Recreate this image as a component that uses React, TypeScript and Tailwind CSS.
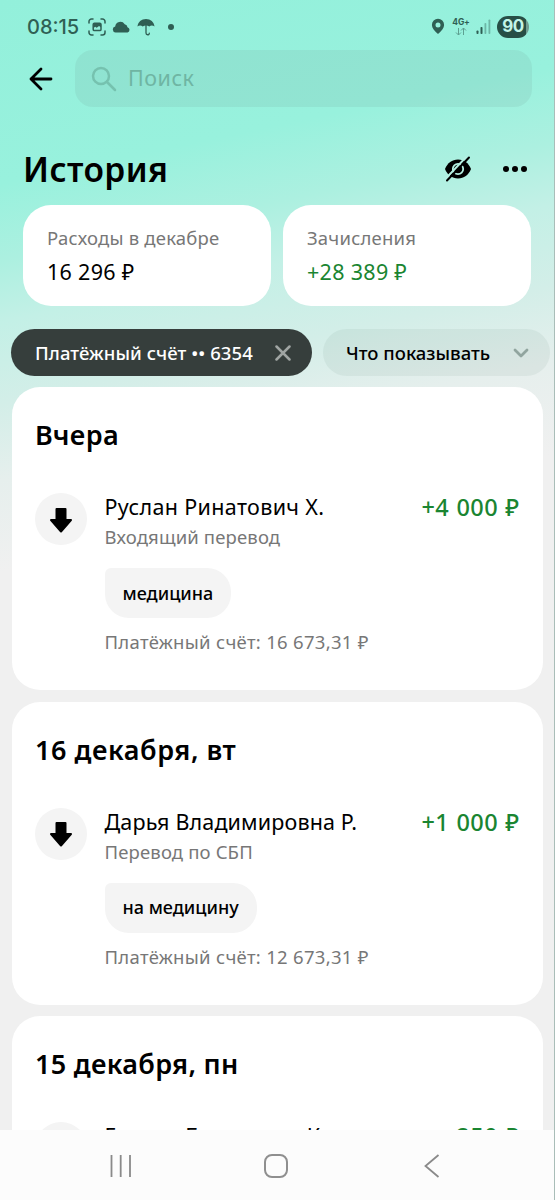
import type { ReactNode } from "react";

const OPERATIONS = [
  {
    day: "Вчера",
    dayClass: "tracking-[0.4px]",
    name: "Руслан Ринатович Х.",
    nameClass: "tracking-[0.35px]",
    kind: "Входящий перевод",
    note: "медицина",
    amount: "+4 000 ₽",
    balance: "Платёжный счёт: 16 673,31 ₽",
  },
  {
    day: "16 декабря, вт",
    dayClass: "tracking-[0.55px]",
    name: "Дарья Владимировна Р.",
    nameClass: "tracking-[0.15px]",
    kind: "Перевод по СБП",
    note: "на медицину",
    amount: "+1 000 ₽",
    balance: "Платёжный счёт: 12 673,31 ₽",
  },
  {
    day: "15 декабря, пн",
    dayClass: "tracking-[0.3px]",
    name: "Галина Борисовна К.",
    nameClass: "tracking-[0.3px]",
    kind: "Перевод по СБП",
    note: "на медицину",
    amount: "+250 ₽",
    balance: "Платёжный счёт: 11 673,31 ₽",
  },
];

function StatusBar() {
  return (
    <div className="flex h-[50px] items-center justify-between pt-[3px] pr-[25px] pl-[27px] text-[#2f5f54]">
      <div className="flex items-center">
        <span className="w-[52px] font-['Inter'] text-[20px] leading-none font-medium whitespace-nowrap">08:15</span>
        <svg className="ml-[9px]" width="18" height="18" viewBox="0 0 18 18" fill="none" stroke="currentColor" strokeWidth="1.5" strokeLinecap="round">
          <path d="M1 5V3.5A2.5 2.5 0 0 1 3.5 1H5M13 1h1.5A2.5 2.5 0 0 1 17 3.5V5M17 13v1.5a2.5 2.5 0 0 1-2.5 2.5H13M5 17H3.5A2.5 2.5 0 0 1 1 14.5V13" />
          <rect x="5.2" y="5.2" width="7.8" height="7.4" rx="1.2" />
          <path d="M5.5 5.5h7.5v3.7l-2-1.2-2.3 1.7-1.5-1-1.7 1.3Z" fill="currentColor" stroke="none" />
        </svg>
        <svg className="ml-[6px]" width="19" height="12" viewBox="0 0 19 12" fill="currentColor">
          <path d="M3.5 11.5a3.1 3.1 0 0 1-.3-6.100A5.200 5.200 0 0 1 12.700 3.200a3.600 3.600 0 0 1 2.800 3.100 2.700 2.700 0 0 1 .1 5.200Z" />
        </svg>
        <svg className="ml-[6px]" width="18" height="18" viewBox="0 0 18 18" fill="none">
          <path d="M.5 8.500C.8 4 4.500 1 9 1s8.200 3 8.500 7.500c-1.600-1.200-3.700-1.200-5.200 0-1.900-1.300-4.700-1.300-6.600 0-1.500-1.200-3.600-1.200-5.200 0Z" fill="currentColor" />
          <path d="M9 7v8c0 2.300 3.300 2.300 3.300.2" stroke="currentColor" strokeWidth="1.300" strokeLinecap="round" />
        </svg>
        <span className="ml-[13px] size-[6px] rounded-full bg-current" />
      </div>
      <div className="flex items-center">
        <svg width="14" height="17" viewBox="0 0 14 17" fill="currentColor" fillRule="evenodd">
          <path d="M7 .8a6.100 6.100 0 0 0-6.100 6.100C.9 10.200 3.500 12.600 7 16c3.500-3.400 6.100-5.800 6.100-9.100A6.100 6.100 0 0 0 7 .8Zm0 3.600a2.500 2.500 0 1 1 0 5 2.500 2.500 0 0 1 0-5Z" />
        </svg>
        <div className="ml-[7px] flex w-[18px] flex-col items-center">
          <span className="font-['Inter'] text-[8.5px] leading-[9px] font-bold tracking-[-0.2px]">4G+</span>
          <svg width="12" height="9" viewBox="0 0 12 9" fill="none" stroke="currentColor" strokeWidth="1" opacity=".55">
            <path d="M3.500 1v7M1 5.500 3.500 8 6 5.500M8.500 8V1M6 3.500 8.500 1 11 3.500" />
          </svg>
        </div>
        <svg className="ml-[6px]" width="15" height="16" viewBox="0 0 15 16" fill="currentColor">
          <rect x=".5" y="11.5" width="2" height="3.5" rx=".8" />
          <rect x="4.5" y="8" width="2" height="7" rx=".8" />
          <rect x="8.5" y="4" width="1.8" height="11" rx=".8" opacity=".4" />
          <rect x="12.5" y=".5" width="1.8" height="14.5" rx=".8" opacity=".4" />
        </svg>
        <div className="ml-[6px] flex h-[22px] w-[32px] items-center justify-center rounded-full bg-[linear-gradient(90deg,#274f46_91%,#6f9d92_91%)] font-['Inter'] text-[17px] leading-none font-bold tracking-[-0.5px] text-[#c3f5e8]">
          90
        </div>
      </div>
    </div>
  );
}

function SummaryCard({ title, children }: { title: string; children: ReactNode }) {
  return (
    <div className="h-[101px] flex-1 rounded-[28px] bg-white pt-[19px] pl-6">
      <div className="text-[18.5px] leading-[28px] tracking-[0.2px] whitespace-nowrap text-[#777]">{title}</div>
      <div className="mt-[6px] text-[21.5px] leading-[28px] tracking-[0.3px] whitespace-nowrap">{children}</div>
    </div>
  );
}

function DayCard({ op }: { op: (typeof OPERATIONS)[number] }) {
  return (
    <section className="h-[303px] shrink-0 rounded-[28px] bg-white pt-[28px] pr-[23px] pl-[23px]">
      <h2 className={`text-[27px] leading-[40px] font-semibold whitespace-nowrap ${op.dayClass}`}>{op.day}</h2>
      <div className="mt-[38px] flex">
        <div className="flex size-[52px] shrink-0 items-center justify-center rounded-full bg-[#f4f4f4]">
          <svg className="mt-[2px]" width="24" height="27" viewBox="0 0 24 27" fill="#000" stroke="#000" strokeWidth="2" strokeLinejoin="round">
            <path d="M7.500 2h9v11h5.500L12 24.500 2 13h5.500Z" />
          </svg>
        </div>
        <div className="ml-[17.5px] flex-1">
          <div className="flex justify-between text-[21.5px] leading-[28px] whitespace-nowrap">
            <span className={op.nameClass}>{op.name}</span>
            <span className="mr-[0.5px] text-[23.5px] font-medium tracking-[0.4px] text-[#1a8531] [word-spacing:0.8px]">{op.amount}</span>
          </div>
          <div className="mt-[2px] text-[18.5px] leading-[28px] tracking-[0.15px] whitespace-nowrap text-[#777]">{op.kind}</div>
          <div className="mt-[17px] flex h-[50px] w-fit items-center rounded-[24px] rounded-tl-[6px] bg-[#f4f4f4] px-[18px] text-[18px] font-medium">
            {op.note}
          </div>
          <div className="mt-[10px] text-[18.5px] leading-[28px] tracking-[0.3px] whitespace-nowrap text-[#777]">{op.balance}</div>
        </div>
      </div>
    </section>
  );
}

export default function App() {
  return (
    <div className="flex h-[1200px] w-[555px] flex-col overflow-hidden border-r border-[#a9bdb8] bg-[linear-gradient(168deg,#93f0db_0px,#98f1dd_180px,#acf0e0_255px,#c3f0e6_315px,#d3eee8_395px,#e6efed_470px,#f0f0f0_560px)] font-['Noto_Sans',sans-serif] text-black">
      <StatusBar />

      <div className="flex items-center pl-[29px]">
        <svg width="24" height="24" viewBox="0 0 24 24" fill="none" stroke="#000" strokeWidth="2.8" strokeLinecap="round" strokeLinejoin="round">
          <path d="M22 12H2M12 2 2 12l10 10" />
        </svg>
        <div className="ml-[22px] flex h-[57px] w-[457px] items-center rounded-[18px] bg-[#6a8f86]/12 pl-[16px]">
          <svg width="26" height="26" viewBox="0 0 26 26" fill="none" stroke="#76c2af" strokeWidth="2.5" strokeLinecap="round">
            <circle cx="10" cy="10" r="8" />
            <path d="m16 16 8 8" />
          </svg>
          <span className="ml-[11px] text-[21.5px] tracking-[0.5px] text-[#6fb5a3]">Поиск</span>
        </div>
      </div>

      <div className="mt-[38px] flex h-[48px] items-center pr-[27px] pl-[23px]">
        <h1 className="flex-1 text-[33.5px] leading-[48px] font-semibold tracking-[0.4px]">История</h1>
        <svg width="28" height="26" viewBox="0 0 28 26" fill="none">
          <path d="M1 13C3.500 7 8 3.500 14 3.500S24.500 7 27 13C24.500 19 20 22.500 14 22.500S3.500 19 1 13Z" fill="#000" />
          <circle cx="14" cy="13" r="5.2" stroke="#b5f0e2" strokeWidth="1.8" />
          <path d="M1.800 22.500 22.500 0.800" stroke="#b5f0e2" strokeWidth="2" />
          <path d="M3 24.500 25 1.500" stroke="#000" strokeWidth="2" strokeLinecap="round" />
        </svg>
        <div className="ml-[31px] flex gap-[3px]">
          <span className="size-[6px] rounded-full bg-black" />
          <span className="size-[6px] rounded-full bg-black" />
          <span className="size-[6px] rounded-full bg-black" />
        </div>
      </div>

      <div className="mt-[12px] flex gap-3 pr-[23px] pl-[23px]">
        <SummaryCard title="Расходы в декабре">16 296 ₽</SummaryCard>
        <SummaryCard title="Зачисления">
          <span className="text-[#1a8531]">+28 389 ₽</span>
        </SummaryCard>
      </div>

      <div className="mt-[23px] flex gap-[11px] pl-[11px] text-[18.5px] font-medium whitespace-nowrap">
        <div className="flex h-[47px] w-[301px] shrink-0 items-center rounded-full bg-[#363e3c] pl-[24px] text-white">
          <span className="w-[240px] tracking-[0.06px]">Платёжный счёт •• 6354</span>
          <svg width="16" height="16" viewBox="0 0 16 16" fill="none" stroke="#a0a5a3" strokeWidth="2.5" strokeLinecap="round">
            <path d="m1.500 1.500 13 13M14.500 1.500l-13 13" />
          </svg>
        </div>
        <div className="flex h-[47px] w-[227px] shrink-0 items-center rounded-full bg-[#4a6f66]/8 pl-[23px]">
          <span className="w-[167px]">Что показывать</span>
          <svg width="16" height="10" viewBox="0 0 16 10" fill="none" stroke="#91a59f" strokeWidth="2.8" strokeLinecap="round" strokeLinejoin="round">
            <path d="m2 2 6 6 6-6" />
          </svg>
        </div>
      </div>

      <div className="mt-[11px] flex min-h-0 flex-1 flex-col gap-[11.5px] overflow-hidden pr-[11px] pl-[12px]">
        {OPERATIONS.map((op) => (
          <DayCard key={op.day} op={op} />
        ))}
      </div>

      <nav className="flex h-[70px] shrink-0 items-center bg-[#fcfcfc] pt-[2px]">
        <svg className="ml-[109px]" width="24" height="24" viewBox="0 0 24 24" stroke="#8a8a8a" strokeWidth="1.8">
          <path d="M2.500 1v22M11.700 1v22M21 1v22" />
        </svg>
        <div className="ml-[131px] size-[24px] rounded-[8px] border-2 border-[#8f8f8f]" />
        <svg className="ml-[136px]" width="16" height="24" viewBox="0 0 16 24" fill="none" stroke="#8a8a8a" strokeWidth="1.8">
          <path d="M14.500 1 1.500 12l13 11" />
        </svg>
      </nav>
    </div>
  );
}
